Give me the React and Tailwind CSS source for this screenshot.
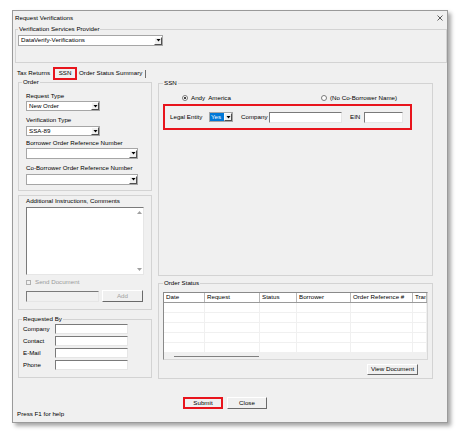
import React from "react";

function Arrow() {
  return (
    <span className="flex h-[8px] w-[8px] shrink-0 items-center justify-center border border-t-white border-l-white border-r-[#505050] border-b-[#505050] bg-[#f0f0f0]">
      <svg width="5" height="3" viewBox="0 0 5 3">
        <path d="M0.5 0H4.5L2.5 2.5Z" fill="#000" />
      </svg>
    </span>
  );
}

function Dropdown({ text, w, h = "h-[10px]" }) {
  return (
    <div className={`flex ${h} ${w} items-center justify-between border border-[#a6a6a6] bg-white pl-[2px] pr-[0px]`}>
      <span className="leading-none">{text}</span>
      <Arrow />
    </div>
  );
}

function Input({ w, h = "h-[10px]", disabled }) {
  return (
    <div
      className={`${w} ${h} border border-t-[#7a7a7a] border-l-[#7a7a7a] border-r-[#e6e6e6] border-b-[#e6e6e6] ${
        disabled ? "bg-[#f0f0f0]" : "bg-white"
      }`}
    />
  );
}

function Button({ children, w, h = "h-[11px]", disabled }) {
  return (
    <div
      className={`flex ${w} ${h} items-center justify-center border border-t-white border-l-white border-r-[#6a6a6a] border-b-[#6a6a6a] bg-[#f0f0f0] leading-none ${
        disabled ? "text-[#a0a0a0]" : "text-black"
      }`}
    >
      {children}
    </div>
  );
}

function Group({ label, className = "", legendMl = "ml-[3px]", inner = "", children }) {
  return (
    <fieldset className={`border border-[#d3d3d3] ${className}`}>
      <legend className={`${legendMl} px-[1px] leading-[8px]`}>{label}</legend>
      <div className={inner}>{children}</div>
    </fieldset>
  );
}

function Radio({ checked }) {
  return (
    <span className="flex h-[6px] w-[6px] items-center justify-center rounded-full border border-[#7a7a7a] bg-white">
      {checked && <span className="h-[2px] w-[2px] rounded-full bg-black" />}
    </span>
  );
}

function Label({ children, className = "" }) {
  return <div className={`h-[8px] leading-[8px] ${className}`}>{children}</div>;
}

export default function App() {
  const cols = [
    ["Date", "w-[41px]"],
    ["Request", "w-[55px]"],
    ["Status", "w-[37px]"],
    ["Borrower", "w-[54px]"],
    ["Order Reference #", "w-[62px]"],
    ["Trans", "flex-1"],
  ];
  return (
    <div className="h-[434px] w-[459px] bg-white pl-[12px] pt-[10px] font-['Liberation_Sans',Arial,sans-serif] text-[6.2px] text-black">
      <div className="flex h-[413px] w-[436px] flex-col border border-[#9a9a9a] bg-[#f0f0f0] shadow-[3px_3px_4px_rgba(0,0,0,0.35)]">
        {/* title */}
        <div className="flex h-[14px] shrink-0 items-center justify-between pl-[2px] pr-[4px]">
          <span className="leading-none">Request Verifications</span>
          <svg width="6" height="6" viewBox="0 0 6 6">
            <path d="M0.5 0.5L5.5 5.5M5.5 0.5L0.5 5.5" stroke="#333" strokeWidth="0.8" />
          </svg>
        </div>

        {/* provider */}
        <Group label="Verification Services Provider" legendMl="ml-[2px]" className="ml-[2px] h-[38px] shrink-0" inner="pl-[2px]">
          <div className="mt-[2px]">
            <Dropdown text="DataVerify-Verifications" w="w-[145px]" h="h-[11px]" />
          </div>
        </Group>

        {/* tabs */}
        <div className="mt-[3px] flex h-[12px] shrink-0 items-start pl-[4px]">
          <span className="mt-[3px] leading-[8px]">Tax Returns</span>
          <div className="ml-[3px] mt-[1px] flex h-[13px] w-[24px] items-center justify-center border-2 border-[#e8141c]">
            <span className="leading-none">SSN</span>
          </div>
          <span className="ml-[2px] mt-[3px] leading-[8px]">Order Status Summary</span>
          <span className="ml-[3px] mt-[4px] h-[8px] w-px bg-[#707070]" />
        </div>

        {/* body */}
        <div className="flex h-[301px] shrink-0 items-start pl-[5px]">
          {/* left column */}
          <div className="flex w-[134px] flex-col">
            <Group label="Order" className="h-[113px]" inner="pl-[7px]">
              <Label className="mt-[6px]">Request Type</Label>
              <div className="mt-[1px]">
                <Dropdown text="New Order" w="w-[74px]" />
              </div>
              <Label className="mt-[5px]">Verification Type</Label>
              <div className="mt-[2px]">
                <Dropdown text="SSA-89" w="w-[74px]" />
              </div>
              <Label className="mt-[3px]">Borrower Order Reference Number</Label>
              <div className="mt-[1px]">
                <Dropdown text="" w="w-[112px]" h="h-[11px]" />
              </div>
              <Label className="mt-[5px]">Co-Borrower Order Reference Number</Label>
              <div className="mt-[2px]">
                <Dropdown text="" w="w-[112px]" h="h-[11px]" />
              </div>
            </Group>

            <div className="mt-[4px] h-[115px] border border-[#d3d3d3] pl-[7px]">
              <Label className="mt-[1px]">Additional Instructions, Comments</Label>
              <div className="mt-[2px] flex h-[68px] w-[118px] justify-end border border-t-[#7a7a7a] border-l-[#7a7a7a] border-r-[#e6e6e6] border-b-[#e6e6e6] bg-white">
                <div className="flex w-[8px] flex-col items-center justify-between py-[3px]">
                  <svg width="5" height="3" viewBox="0 0 5 3">
                    <path d="M0 3H5L2.5 0Z" fill="#a0a0a0" />
                  </svg>
                  <svg width="5" height="3" viewBox="0 0 5 3">
                    <path d="M0 0H5L2.5 3Z" fill="#a0a0a0" />
                  </svg>
                </div>
              </div>
              <div className="mt-[3px] flex h-[8px] items-center text-[#9a9a9a]">
                <span className="h-[5px] w-[5px] border border-[#b0b0b0] bg-[#f0f0f0]" />
                <span className="ml-[4px] leading-none">Send Document</span>
              </div>
              <div className="mt-[4px] flex items-center">
                <Input w="w-[73px]" h="h-[11px]" disabled />
                <div className="ml-[3px]">
                  <Button w="w-[41px]" h="h-[12px]" disabled>
                    Add
                  </Button>
                </div>
              </div>
            </div>

            <Group label="Requested By" className="mt-[5px] h-[63px]" inner="pl-[4px]">
              <div className="mt-[1px] flex flex-col gap-[2px]">
                {["Company", "Contact", "E-Mail", "Phone"].map((l) => (
                  <div key={l} className="flex items-center">
                    <span className="w-[32px] leading-none">{l}</span>
                    <Input w="w-[73px]" />
                  </div>
                ))}
              </div>
            </Group>
          </div>

          {/* right column */}
          <div className="ml-[6px] flex w-[275px] flex-col">
            <Group label="SSN" legendMl="ml-[4px]" className="mt-[1px] h-[197px]">
              <div className="mt-[7px] flex h-[8px] items-center pl-[23px]">
                <div className="flex w-[139px] items-center">
                  <Radio checked />
                  <span className="ml-[3px] leading-none">Andy&nbsp; America</span>
                </div>
                <div className="flex items-center">
                  <Radio />
                  <span className="ml-[3px] leading-none">(No Co-Borrower Name)</span>
                </div>
              </div>
              <div className="ml-[4px] mt-[2px] flex h-[26px] w-[249px] items-center border-2 border-[#e8141c] pl-[5px]">
                <span className="w-[39px] leading-none">Legal Entity</span>
                <div className="flex h-[10px] w-[24px] items-center justify-between border border-[#a6a6a6] bg-white p-[0px]">
                  <span className="flex h-full w-[14px] items-center bg-[#0078d7] pl-[1px] leading-none text-white">Yes</span>
                  <Arrow />
                </div>
                <span className="ml-[8px] w-[28px] leading-none">Company</span>
                <Input w="w-[73px]" h="h-[11px]" />
                <span className="ml-[8px] w-[14px] leading-none">EIN</span>
                <Input w="w-[39px]" h="h-[11px]" />
              </div>
            </Group>

            <Group label="Order Status" legendMl="ml-[4px]" className="mt-[3px] h-[100px]">
              <div className="ml-[4px] mt-[5px] flex h-[68px] w-[265px] flex-col overflow-hidden border border-t-[#8a8a8a] border-l-[#8a8a8a] border-r-[#d8d8d8] border-b-[#d8d8d8] bg-white">
                <div className="flex h-[10px] shrink-0 border-b-[1.5px] border-[#9a9a9a]">
                  {cols.map(([c, w]) => (
                    <div key={c} className={`${w} flex items-center overflow-hidden whitespace-nowrap border-r border-[#b8b8b8] pl-[2px] leading-none`}>
                      {c}
                    </div>
                  ))}
                </div>
                {[0, 1, 2, 3, 4].map((r) => (
                  <div key={r} className="flex h-[10px] shrink-0 border-b border-[#f0f0f0]">
                    {cols.map(([c, w]) => (
                      <div key={c} className={`${w} border-r border-[#f0f0f0]`} />
                    ))}
                  </div>
                ))}
                <div className="flex flex-1 items-center bg-[#f0f0f0] pl-[10px]">
                  <div className="h-px w-[85px] bg-[#808080]" />
                </div>
              </div>
              <div className="mr-[14px] mt-[4px] flex justify-end">
                <Button w="w-[51px]">View Document</Button>
              </div>
            </Group>
          </div>
        </div>

        {/* buttons */}
        <div className="mt-[18px] flex h-[12px] shrink-0 justify-center gap-[4px] pr-[10px]">
          <div className="flex h-[12px] w-[40px] items-center justify-center border-2 border-[#e8141c] bg-[#f0f0f0] leading-none">
            Submit
          </div>
          <Button w="w-[40px]" h="h-[12px]">
            Close
          </Button>
        </div>

        {/* status */}
        <div className="mt-[1px] h-[8px] shrink-0 pl-[4px] leading-[8px]">Press F1 for help</div>
      </div>
    </div>
  );
}
